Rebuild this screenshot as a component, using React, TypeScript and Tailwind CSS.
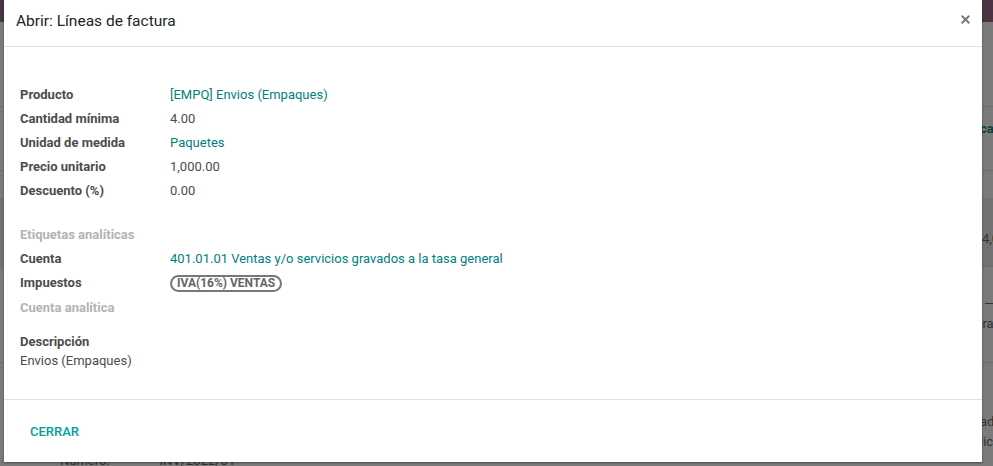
import { X } from "lucide-react";

const teal = "text-[#01807f]";

const Row = ({
  label,
  children,
  muted = false,
  h = "h-[24px]",
}: {
  label: string;
  children?: React.ReactNode;
  muted?: boolean;
  h?: string;
}) => (
  <div className={`flex items-center ${h}`}>
    <div
      className={`w-[150px] shrink-0 font-bold ${
        muted ? "text-[#b3b3b3]" : "text-[#4c4c4c]"
      }`}
    >
      {label}
    </div>
    <div className="text-[#4c4c4c]">{children}</div>
  </div>
);

// dimmed page that sits behind the dialog, only its edges show
const BackPage = () => (
  <div className="flex flex-col h-full text-[#333] whitespace-nowrap">
    <div className="h-[22px] shrink-0 bg-[#4a3545]" />
    <div className="h-[84px] shrink-0" />
    <div className="h-[64px] shrink-0 border-t border-[#6c6c6c] pl-[980px] pt-[12px] font-bold text-[#0b3e3d]">
      car
    </div>
    <div className="h-[28px] shrink-0 border-t border-[#6c6c6c]" />
    <div className="h-[68px] shrink-0 bg-[#727272] pl-[982px] pt-[31px]">4,0</div>
    <div className="h-[96px] shrink-0 border-t border-[#6c6c6c] pl-[982px] pt-[27px] leading-[20px]">
      <div className="pl-[2px]">—</div>
      <div className="-ml-[4px]">rra</div>
    </div>
    <div className="flex-1 border-t border-[#6c6c6c] pt-[49px] leading-[20px]">
      <div className="pl-[980px]">ad</div>
      <div className="pl-[980px]">lic</div>
      <div className="flex gap-[30px] pl-[60px] -mt-[1px]">
        <span>Número:</span>
        <span className="pl-[20px]">INV/2022/01</span>
      </div>
    </div>
  </div>
);

const App = () => {
  return (
    <div
      className="relative w-[993px] h-[466px] overflow-hidden bg-[#7a7a7a] text-[13px]"
      style={{ fontFamily: "Roboto, 'Liberation Sans', sans-serif" }}
    >
      <BackPage />

      {/* dialog */}
      <div className="absolute left-[4px] top-0 w-[978px] h-[462px] bg-white flex flex-col shadow-[0_1px_2px_rgba(0,0,0,0.4)]">
        <header className="h-[47px] shrink-0 border-b border-[#dee2e6] flex items-start justify-between pl-[12px] pr-[10px] pt-[11px]">
          <h4 className="text-[15.5px] leading-[20px] text-[#212529]">
            Abrir: Líneas de factura
          </h4>
          <X className="mt-[2px] w-[13px] h-[13px] text-[#777]" strokeWidth={3.5} />
        </header>

        <main className="flex-1 pl-[16px] pt-[36px]">
          <Row label="Producto">
            <span className={teal}>[EMPQ] Envios (Empaques)</span>
          </Row>
          <Row label="Cantidad mínima">4.00</Row>
          <Row label="Unidad de medida">
            <span className={teal}>Paquetes</span>
          </Row>
          <Row label="Precio unitario">1,000.00</Row>
          <Row label="Descuento (%)">0.00</Row>

          <div className="mt-[20px]">
            <Row label="Etiquetas analíticas" muted />
            <Row label="Cuenta">
              <span className={teal}>
                401.01.01 Ventas y/o servicios gravados a la tasa general
              </span>
            </Row>
            <Row label="Impuestos">
              <span className="inline-flex items-center h-[17px] px-[5px] rounded-full border-2 border-[#787878] text-[12px] font-bold text-[#666]">
                IVA(16%) VENTAS
              </span>
            </Row>
            <Row label="Cuenta analítica" muted h="h-[25px]" />
          </div>

          <div className="mt-[12px] leading-[19px]">
            <div className="font-bold text-[#4c4c4c]">Descripción</div>
            <div className="text-[#4c4c4c]">Envios (Empaques)</div>
          </div>
        </main>

        <footer className="h-[63px] shrink-0 border-t border-[#dee2e6] flex items-center pl-[26px] pt-[1px]">
          <button className="text-[13px] font-medium text-[#00a09d] uppercase">
            Cerrar
          </button>
        </footer>
      </div>
    </div>
  );
};

export default App;
